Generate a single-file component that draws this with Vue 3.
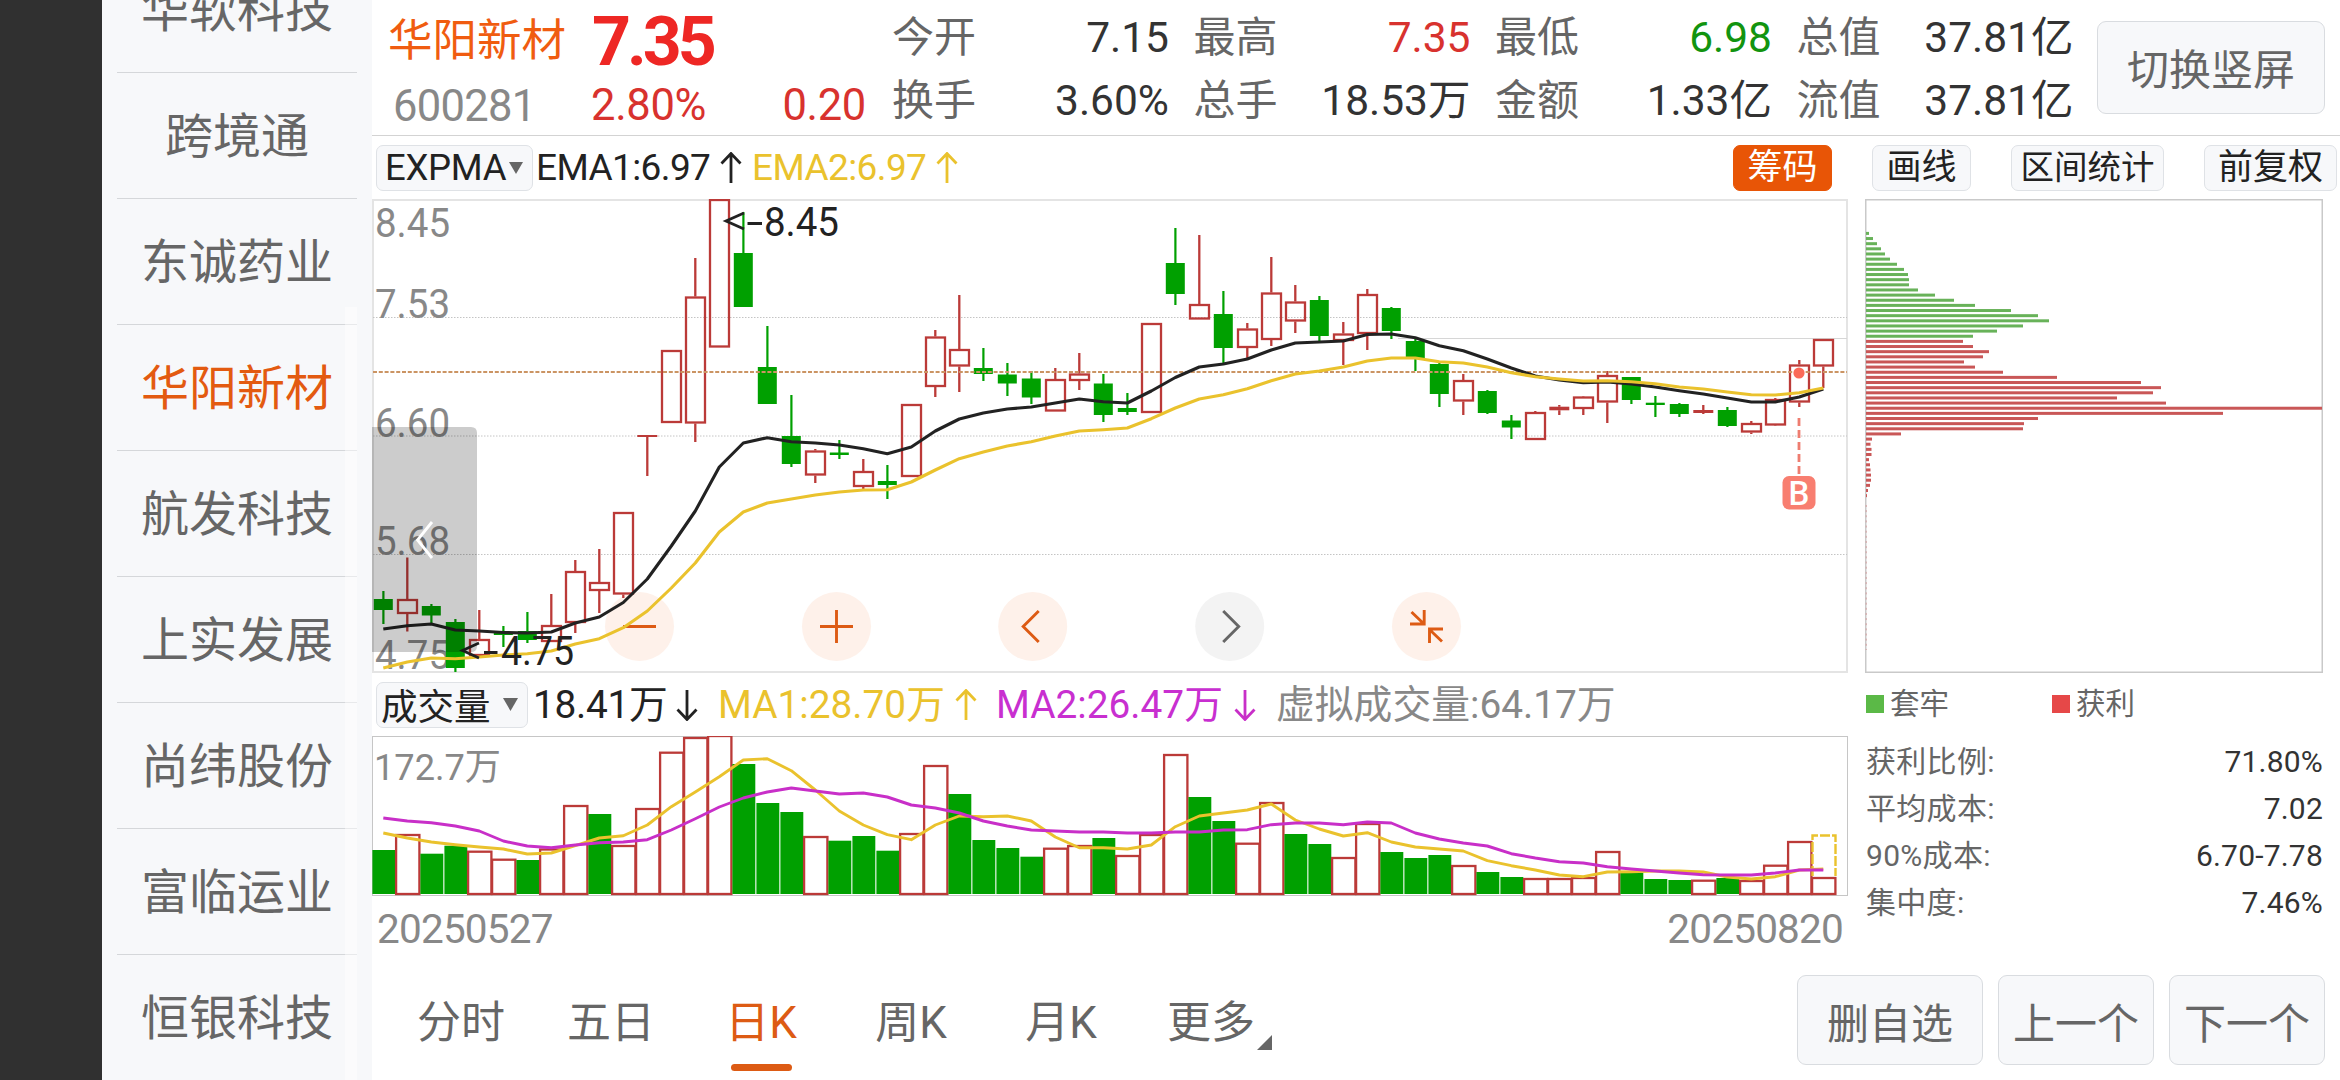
<template>
  <div class="app">
    <div class="edge"></div>

    <aside class="watchlist">
      <div
        v-for="name in stocks"
        :key="name"
        class="stock"
        :class="{ active: name === current }"
      >{{ name }}</div>
      <div class="scrollbar"></div>
    </aside>

    <main class="main">
      <header class="header">
        <div class="quote">
          <span class="q-name">{{ current }}</span>
          <span class="q-price">7.35</span>
          <span class="q-code">600281</span>
          <span class="q-change"><span>2.80%</span><span>0.20</span></span>
        </div>
        <div class="stats">
          <div v-for="s in stats" :key="s.label" class="stat">
            <span class="stat-label">{{ s.label }}</span>
            <span class="stat-value" :class="s.cls">{{ s.value }}</span>
          </div>
        </div>
        <button class="btn btn-switch">切换竖屏</button>
      </header>

      <div class="toolbar">
        <div class="picker picker-main">
          <span>EXPMA</span>
          <svg width="14" height="12" viewBox="0 0 14 12"><path d="M0 0H14L7 12Z" fill="#666" /></svg>
        </div>
        <span class="ind ema ema1">EMA1:6.97</span>
        <svg class="arrow c-black" viewBox="0 0 22 32"><path d="M11 31V2M1.5 11.5L11 1.5L20.5 11.5" /></svg>
        <span class="ind ema ema2">EMA2:6.97</span>
        <svg class="arrow c-yellow" viewBox="0 0 22 32"><path d="M11 31V2M1.5 11.5L11 1.5L20.5 11.5" /></svg>
        <div class="tools">
          <button class="tool primary">筹码</button>
          <button class="tool">画线</button>
          <button class="tool wide">区间统计</button>
          <button class="tool mid">前复权</button>
        </div>
      </div>

      <div class="body">
        <section class="charts">
          <!-- K线主图 -->
          <svg class="kline" viewBox="372 199 1477 474" width="1477" height="474">
            <rect x="373" y="200" width="1474" height="472" fill="none" stroke="#e4e4e4" stroke-width="2" />
            <line v-for="y in [317.5, 436, 554.5]" :key="y" x1="373" x2="1847" :y1="y" :y2="y" class="dotted" />
            <line x1="1398" x2="1847" y1="338.5" y2="338.5" stroke="#d6d6d6" />

            <text
              v-for="l in axis"
              :key="l.t"
              x="375"
              :y="l.y"
              class="axis"
              textLength="75"
              lengthAdjust="spacingAndGlyphs"
            >{{ l.t }}</text>

            <circle
              v-for="(c, i) in controls"
              :key="'c' + i"
              :cx="c.x"
              cy="626.5"
              r="34.5"
              :fill="c.gray ? '#f3f3f3' : '#fef1ea'"
            />
            <path
              v-for="(c, i) in controls"
              :key="'p' + i"
              :d="c.d"
              :transform="`translate(${c.x} 626.5)`"
              fill="none"
              :stroke="c.gray ? '#666' : '#dd5b14'"
              stroke-width="2.9"
            />

            <g v-for="(k, i) in candles" :key="'k' + i">
              <template v-if="k[0] === 'g'">
                <rect :x="cx(i) - 1" :y="k[1]" width="2.2" :height="k[4] - k[1]" fill="#00a000" />
                <rect :x="cx(i) - 9.5" :y="k[2]" width="19" :height="k[3] - k[2]" fill="#00a000" />
              </template>
              <template v-else>
                <path
                  :d="`M${cx(i)} ${k[1]}V${k[2]}M${cx(i)} ${k[3]}V${k[4]}`"
                  stroke="#bb3a38"
                  stroke-width="2.3"
                />
                <line
                  v-if="k[3] - k[2] < 4"
                  :x1="cx(i) - 10"
                  :x2="cx(i) + 10"
                  :y1="(k[2] + k[3]) / 2"
                  :y2="(k[2] + k[3]) / 2"
                  stroke="#bb3a38"
                  :stroke-width="Math.max(2, k[3] - k[2])"
                />
                <rect
                  v-else
                  :x="cx(i) - 9.3"
                  :y="k[2] + 1"
                  width="19"
                  :height="k[3] - k[2] - 2"
                  fill="none"
                  stroke="#bb3a38"
                  stroke-width="2.3"
                />
              </template>
            </g>

            <line x1="373" x2="1847" y1="372" y2="372" stroke="#cb9463" stroke-width="2" stroke-dasharray="4 1.8" />
            <polyline :points="toPoints(ema1)" fill="none" stroke="#222" stroke-width="3.1" stroke-linejoin="round" />
            <polyline :points="toPoints(ema2)" fill="none" stroke="#eac22d" stroke-width="3.1" stroke-linejoin="round" />

            <path d="M744 213L726 221L744 229M747.5 223.5H762" class="mark" />
            <text x="764" y="235.5" class="mark-text" textLength="75" lengthAdjust="spacingAndGlyphs">8.45</text>
            <path d="M479 643L462.5 650.5L479 658M484 652.5H497.5" class="mark" />
            <text x="501" y="664.5" class="mark-text" textLength="73" lengthAdjust="spacingAndGlyphs">4.75</text>

            <!-- 买点 -->
            <circle cx="1799" cy="373" r="5.6" fill="#fb6a58" />
            <line x1="1799" x2="1799" y1="418" y2="474" stroke="#ee7d70" stroke-width="2.8" stroke-dasharray="8 4" />
            <rect x="1782.5" y="476" width="33" height="33.5" rx="6.5" fill="#f87e70" />
            <text x="1799" y="504.5" class="buy">B</text>

            <path d="M372 427H471Q477 427 477 433V646Q477 652 471 652H372Z" fill="#000" fill-opacity=".2" />
            <path d="M432 522L417.5 540L432 558" fill="none" stroke="#fff" stroke-width="2.8" />
          </svg>

          <div class="toolbar vol-bar">
            <div class="picker picker-vol">
              <span>成交量</span>
              <svg width="15" height="13" viewBox="0 0 14 12"><path d="M0 0H14L7 12Z" fill="#666" /></svg>
            </div>
            <span class="ind vol">18.41万</span>
            <svg class="arrow c-black" viewBox="0 0 22 32"><path d="M11 1V30M1.5 20.5L11 30.5L20.5 20.5" /></svg>
            <span class="ind vol-ma1">MA1:28.70万</span>
            <svg class="arrow c-yellow" viewBox="0 0 22 32"><path d="M11 31V2M1.5 11.5L11 1.5L20.5 11.5" /></svg>
            <span class="ind vol-ma2">MA2:26.47万</span>
            <svg class="arrow c-purple" viewBox="0 0 22 32"><path d="M11 1V30M1.5 20.5L11 30.5L20.5 20.5" /></svg>
            <span class="ind vol-virtual">虚拟成交量:64.17万</span>
          </div>

          <!-- 成交量副图 -->
          <svg class="volume" viewBox="372 736 1477 160" width="1477" height="160">
            <rect x="372.5" y="736.5" width="1475" height="159" fill="none" stroke="#c6c6c6" />
            <text x="374" y="779.5" class="axis vol-axis" textLength="127" lengthAdjust="spacingAndGlyphs">172.7万</text>
            <g v-for="(top, i) in volumes" :key="'v' + i">
              <rect
                v-if="volDown.includes(i)"
                :x="cx(i) - 10.9"
                :y="top"
                width="22.9"
                :height="894 - top"
                fill="#00a000"
              />
              <rect
                v-else
                :x="cx(i) - 11.2"
                :y="top + 1"
                width="23.3"
                :height="893 - top"
                fill="#fff"
                stroke="#bb3a38"
                stroke-width="2.3"
              />
            </g>
            <path d="M1812.5 876V835.5H1835.5V876" fill="none" stroke="#eac22d" stroke-width="2.4" stroke-dasharray="10 2" />
            <polyline :points="toPoints(volMa1)" fill="none" stroke="#eac22d" stroke-width="2.9" stroke-linejoin="round" />
            <polyline :points="toPoints(volMa2)" fill="none" stroke="#c82fc8" stroke-width="2.9" stroke-linejoin="round" />
          </svg>

          <div class="dates"><span>20250527</span><span>20250820</span></div>
        </section>

        <section class="chips">
          <svg viewBox="1865 199 458 474" width="458" height="474">
            <rect x="1865.75" y="199.75" width="456.5" height="472.5" fill="none" stroke="#c9c9c9" stroke-width="1.5" />
            <rect
              v-for="(w, i) in chipBars"
              :key="i"
              x="1866"
              :y="231.9 + i * 5.142"
              :width="w"
              height="3"
              :fill="i < 21 ? '#68b259' : '#c95757'"
            />
            <line x1="1866.2" x2="1866.2" y1="505" y2="650" stroke="#d4a0a0" stroke-dasharray="2 3.14" />
          </svg>
          <div class="legend">
            <span><i class="green"></i>套牢</span>
            <span><i class="red"></i>获利</span>
          </div>
          <dl class="chip-info">
            <div v-for="r in chipInfo" :key="r[0]"><dt>{{ r[0] }}</dt><dd>{{ r[1] }}</dd></div>
          </dl>
        </section>
      </div>

      <footer class="footer">
        <nav class="tabs">
          <span v-for="t in tabs" :key="t" class="tab" :class="{ active: t === '日K' }">
            {{ t }}
            <svg v-if="t === '更多'" class="corner" viewBox="0 0 15 15"><path d="M15 0V15H0Z" fill="#666" /></svg>
          </span>
        </nav>
        <div class="actions">
          <button class="btn wide">删自选</button>
          <button class="btn">上一个</button>
          <button class="btn">下一个</button>
        </div>
      </footer>
    </main>
  </div>
</template>

<script setup>
const stocks = ['华软科技', '跨境通', '东诚药业', '华阳新材', '航发科技', '上实发展', '尚纬股份', '富临运业', '恒银科技']
const current = '华阳新材'
const tabs = ['分时', '五日', '日K', '周K', '月K', '更多']

const stats = [
  { label: '今开', value: '7.15' },
  { label: '最高', value: '7.35', cls: 'up' },
  { label: '最低', value: '6.98', cls: 'down' },
  { label: '总值', value: '37.81亿' },
  { label: '换手', value: '3.60%' },
  { label: '总手', value: '18.53万' },
  { label: '金额', value: '1.33亿' },
  { label: '流值', value: '37.81亿' },
]

const chipInfo = [
  ['获利比例:', '71.80%'],
  ['平均成本:', '7.02'],
  ['90%成本:', '6.70-7.78'],
  ['集中度:', '7.46%'],
]

const axis = [
  { t: '8.45', y: 237 },
  { t: '7.53', y: 318 },
  { t: '6.60', y: 436.5 },
  { t: '5.68', y: 555 },
  { t: '4.75', y: 669 },
]

const controls = [
  { x: 639.5, d: 'M-16.5 0H16.5' },
  { x: 836.5, d: 'M-16.5 0H16.5M0 -16.5V16.5' },
  { x: 1032.7, d: 'M6 -15.5L-9.5 0L6 15.5' },
  { x: 1229.7, d: 'M-6.5 -15.5L9 0L-6.5 15.5', gray: true },
  { x: 1426.5, d: 'M-15 -14.5L-3 -3M-2.3 -16.5V-2.5H-16.5M16.5 2.5H3V16.5M4 4L15.5 15' },
]

// [颜色, 最高, 实体上沿, 实体下沿, 最低]
const candles = [
  ['g', 591, 599, 610, 624], ['r', 557.5, 599, 614, 631.5], ['g', 604, 606, 615.5, 623], ['g', 619, 622, 668, 672],
  ['r', 610, 639, 656, 656], ['g', 626, 632, 635, 647], ['g', 612, 631, 640, 643], ['r', 594, 625, 642, 642],
  ['r', 560, 571, 623, 633], ['r', 549, 582, 591, 613], ['r', 512, 512, 594.5, 598], ['r', 435, 435, 437, 476],
  ['r', 350, 350, 423, 423], ['r', 258, 296.5, 423.5, 442], ['r', 199, 199, 347.5, 347.5], ['g', 212, 253, 307, 307],
  ['g', 326, 367, 404, 404], ['g', 395, 436, 464, 467], ['r', 449, 450.5, 475.5, 483], ['g', 440, 452.5, 455, 459],
  ['r', 459, 471, 487, 489], ['g', 465, 481, 485, 499], ['r', 404, 404, 477, 477], ['r', 330, 336.5, 387, 397],
  ['r', 295, 349, 366.5, 392], ['g', 348, 368, 374, 381], ['g', 363, 374.5, 383.5, 396], ['g', 371, 378.5, 397.5, 404],
  ['r', 368, 379, 411.5, 411.5], ['r', 353, 373.5, 381, 390], ['g', 374, 383.5, 415, 422], ['g', 393, 408, 412, 415],
  ['r', 323, 323, 413, 413], ['g', 228, 263, 294, 305], ['r', 235, 304, 319.5, 319.5], ['g', 291, 314, 348, 363],
  ['r', 323, 328.5, 348, 358], ['r', 257, 292.5, 340, 346], ['r', 285, 301.5, 321.5, 333], ['g', 296, 300, 336, 341],
  ['r', 322, 333.5, 341, 365], ['r', 289, 294, 334, 350], ['g', 307, 308, 331, 339], ['g', 339, 341, 359, 371],
  ['g', 362, 364, 394, 407], ['r', 374, 380, 401.5, 415], ['g', 390, 391, 413, 414], ['g', 415, 420.5, 427.5, 439],
  ['r', 411, 412, 440, 440], ['r', 405, 406.7, 410.3, 415], ['r', 396, 396.5, 409, 415], ['r', 371, 375, 402.5, 423],
  ['g', 377, 377, 400, 404], ['g', 396, 402.7, 405, 417], ['g', 403, 404, 414, 417], ['r', 405, 410, 413, 414],
  ['g', 407, 410, 426, 427], ['r', 421, 423, 432.5, 434], ['r', 398, 399, 425.5, 426], ['r', 360, 364.5, 402.5, 407],
  ['r', 339, 339, 366.5, 388],
]

const ema1 = [
  629, 625.7, 624, 630, 631, 632.5, 633, 632, 623, 617, 602.5, 579, 546, 511, 467, 443, 437.7, 441.7, 443, 445, 448.7,
  453.7, 447, 431, 419, 413, 409, 407, 403, 399, 401.7, 403, 391, 377.5, 367, 364, 359, 350, 343, 342, 341, 334.5, 334,
  337.7, 345.7, 350.7, 359, 368, 376, 380, 382.7, 382, 384, 387, 390.7, 394, 398, 402, 402, 397, 389,
]
const ema2 = [
  668, 662, 658, 658.7, 657, 655, 653.7, 651, 644, 638.7, 627.7, 611, 588, 563, 532, 512, 503, 499, 495, 492, 490,
  489.7, 482, 470, 458.7, 452, 446, 441.7, 436, 431, 429.7, 428, 418.7, 408, 399, 394.7, 388.7, 380.7, 374, 371, 367,
  361, 358, 358, 361.7, 363, 367, 372.7, 376.7, 379, 381, 380.7, 381.7, 383.7, 387, 389, 392, 394.7, 395, 392.7, 388,
]

const volumes = [
  850, 834, 853.7, 845.7, 850.7, 858.7, 860, 848.5, 805, 814, 845, 808, 751.7, 737, 735, 764, 803, 812, 836, 840.7,
  836, 850.7, 833, 765, 794, 840, 848, 856.7, 847.7, 845, 838, 855, 834, 754, 797, 821, 842.7, 802, 834, 844, 857, 823,
  852, 858, 855, 865, 872, 877, 878, 878, 877, 851, 872.7, 879, 880, 879.7, 878, 880, 864.7, 841, 877,
]
// 收盘低于前一日的柱子画成绿色
const volDown = [
  0, 2, 3, 6, 9, 15, 16, 17, 19, 20, 21, 24, 25, 26, 27, 30, 34, 35, 38, 39, 42, 43, 44, 46, 47, 52, 53, 54, 56,
]
const volMa1 = [
  833, 838, 842, 844.7, 847, 849, 854, 853, 845.7, 838, 835.7, 825, 806.7, 792, 776.7, 760, 758.7, 770.7, 790, 811,
  825, 834.7, 839.7, 825, 816, 816.7, 816, 821, 837, 847.7, 847.7, 849, 845, 826.7, 816, 813, 810, 804, 820, 829, 836,
  832.7, 842, 847, 849, 851, 860.7, 865.7, 870, 875, 876.7, 872, 871.7, 871, 871, 872, 877, 879, 876.7, 870, 869,
]
const volMa2 = [
  818, 821, 822.7, 826, 831, 841, 846, 847.7, 845, 842.7, 842, 839.7, 830, 818.7, 807, 798, 792, 788, 791, 794, 793,
  797, 805, 808, 813, 821, 826, 830, 831, 832, 832, 833, 833, 832, 832, 830, 829.7, 824.7, 823, 823, 824.7, 822, 823,
  833, 839, 843, 846, 853.7, 858, 861.7, 863, 866.7, 869, 871, 873, 874.7, 875, 875, 873, 870, 870,
]

// 筹码分布：前 21 条为套牢，其余为获利
const chipBars = [
  3, 7, 11, 15, 19, 24, 31, 38, 42, 43, 43, 52, 69, 88, 109, 145, 172, 183, 157, 131, 107,
  97, 107, 123, 117, 98, 109, 137, 191, 275, 295, 287, 251, 300, 456, 357, 172, 158, 157, 35,
  6, 4.5, 5.5, 5.5, 3, 4, 4.5, 5, 5, 4, 2, 1,
]

const cx = (i) => 383.3 + i * 24
const toPoints = (ys) => ys.map((y, i) => `${cx(i)},${y}`).join(' ')
</script>

<style>
body {
  background: #fff;
}
</style>

<style scoped>
.app {
  display: flex;
  width: 2340px;
  height: 1080px;
  overflow: hidden;
  background: #fff;
  font-family: Roboto, "Noto Sans CJK SC", sans-serif;
  color: #333;
}

button {
  font-family: inherit;
  padding: 0;
  margin: 0;
}

.edge {
  width: 102px;
  background: #303030;
  flex: none;
}

/* 自选列表 */
.watchlist {
  position: relative;
  flex: none;
  width: 240px;
  padding: 0 15px;
  background: #f7f8fa;
}

.stock {
  box-sizing: border-box;
  height: 126px;
  border-bottom: 1px solid #d5d7da;
  line-height: 128px;
  font-size: 48px;
  color: #666;
  text-align: center;
  white-space: nowrap;
}

.stock:first-child {
  margin-top: -53px;
}

.stock.active {
  color: #e35a10;
}

.scrollbar {
  position: absolute;
  right: 15px;
  top: 307px;
  bottom: 0;
  width: 12px;
  background: rgba(255, 255, 255, 0.45);
}

.main {
  flex: 1;
  min-width: 0;
  display: flex;
  flex-direction: column;
}

/* 行情头部 */
.header {
  box-sizing: border-box;
  height: 136px;
  flex: none;
  display: flex;
  border-bottom: 1px solid #d3d3d3;
}

.quote {
  width: 520px;
  box-sizing: border-box;
  display: grid;
  grid-template-columns: 201px 278px;
  grid-template-rows: 77px 59px;
  padding-left: 17px;
  align-items: center;
  white-space: nowrap;
}

.q-name {
  font-size: 44.5px;
  padding-bottom: 4px;
  margin-left: -1px;
  color: #f05c10;
}

.q-price {
  font-size: 68px;
  font-weight: 700;
  line-height: 72px;
  padding-top: 6px;
  letter-spacing: -4px;
  margin-left: 2px;
  color: #ee2724;
}

.q-code {
  font-size: 43.5px;
  letter-spacing: -0.7px;
  color: #888;
  padding-left: 4px;
}

.q-change {
  display: flex;
  justify-content: space-between;
  font-size: 43.5px;
  letter-spacing: -0.3px;
  color: #d8322e;
  padding: 0 2px 2px 1px;
}

.stats {
  width: 1180px;
  display: grid;
  grid-template-columns: repeat(4, 277px);
  grid-template-rows: 63px 63px;
  column-gap: 24.5px;
  padding-top: 6px;
}

.stat {
  display: flex;
  justify-content: space-between;
  align-items: center;
  font-size: 42px;
  line-height: 63px;
  white-space: nowrap;
}

.stat-label {
  color: #666;
}

.stat-value {
  font-size: 42.5px;
}

.up {
  color: #d8322e;
}

.down {
  color: #12940f;
}

.btn {
  box-sizing: border-box;
  width: 156px;
  height: 90px;
  border: 1px solid #d9dce0;
  border-radius: 9px;
  background: #f7f8fa;
  font-size: 42px;
  color: #666;
  white-space: nowrap;
}

.btn.wide {
  width: 186px;
}

.btn-switch {
  width: 228px;
  height: 93px;
  margin: 21px 0 0 25px;
  padding-bottom: 2px;
}

/* 指标栏 */
.toolbar {
  height: 63px;
  flex: none;
  display: flex;
  align-items: center;
  padding-left: 4px;
  white-space: nowrap;
}

.picker {
  box-sizing: border-box;
  height: 46px;
  display: flex;
  align-items: center;
  border: 1px solid #dfe2e6;
  border-radius: 7px;
  background: #f7f8fa;
  font-size: 36.5px;
  color: #222;
}

.picker-main {
  width: 157px;
  padding-left: 8px;
  gap: 3px;
  letter-spacing: -0.3px;
}

.picker-vol {
  width: 152px;
  padding-left: 4px;
  gap: 12px;
}

.ind {
  font-size: 38.8px;
  line-height: 46px;
}

.arrow {
  width: 22px;
  height: 32px;
  fill: none;
  stroke-width: 2.8;
  flex: none;
}

.c-black {
  stroke: #222;
}

.c-yellow {
  stroke: #eac22d;
}

.c-purple {
  stroke: #c82fc8;
}

.ema {
  width: 184px;
  font-size: 37px;
  letter-spacing: -0.6px;
}

.ema1 {
  margin-left: 3px;
  color: #222;
}

.ema2 {
  margin-left: 10px;
  color: #eac22d;
}

.vol {
  width: 143px;
  margin-left: 5px;
  letter-spacing: -0.3px;
  color: #222;
}

.vol-ma1 {
  width: 237px;
  margin-left: 20px;
  color: #eac22d;
}

.vol-ma2 {
  width: 238px;
  margin-left: 19px;
  color: #c82fd0;
}

.vol-virtual {
  margin-left: 20px;
  color: #888;
}

.tools {
  display: flex;
  margin-left: auto;
  padding-right: 3px;
  gap: 40px;
}

.tool {
  box-sizing: border-box;
  width: 99px;
  height: 46px;
  border: 1px solid #dfe2e6;
  border-radius: 7px;
  background: #f7f8fa;
  font-size: 35px;
  line-height: 42px;
  color: #222;
}

.tool.primary {
  border-color: #e85506;
  background: #e85506;
  color: #fff;
}

.tool.wide {
  width: 153px;
  font-size: 33.5px;
}

.tool.mid {
  width: 133px;
}

.body {
  display: flex;
  flex: none;
  height: 776px;
}

.charts {
  width: 1477px;
  flex: none;
}

.charts > svg,
.chips > svg {
  display: block;
}

.dotted {
  stroke: #c4c4c4;
  stroke-width: 1;
  stroke-dasharray: 1.5 1.5;
}

.axis {
  font-size: 40.5px;
  fill: #888;
}

.vol-axis {
  font-size: 37px;
}

.mark {
  fill: none;
  stroke: #222;
  stroke-width: 2.8;
}

.mark-text {
  font-size: 40px;
  fill: #222;
}

.buy {
  font-size: 33px;
  font-weight: 500;
  fill: #fff;
  text-anchor: middle;
}

.dates {
  display: flex;
  justify-content: space-between;
  padding: 8px 6px 0 5px;
  font-size: 40.5px;
  line-height: 50px;
  letter-spacing: -0.8px;
  color: #888;
}

/* 筹码分布 */
.chips {
  width: 458px;
  margin-left: 16px;
}

.legend {
  display: flex;
  height: 62px;
  font-size: 29.5px;
  line-height: 62px;
  color: #666;
}

.legend span {
  display: flex;
  align-items: center;
  width: 186px;
}

.legend i {
  width: 18px;
  height: 18px;
  margin-right: 6px;
  margin-left: 1px;
}

.green {
  background: #5bb947;
}

.red {
  background: #e64848;
}

.chip-info {
  margin: 3px 0 0;
  font-size: 30px;
  line-height: 47px;
}

.chip-info div {
  display: flex;
  justify-content: space-between;
}

.chip-info dt {
  margin-left: 1px;
  letter-spacing: 0.3px;
  color: #666;
}

.chip-info dd {
  margin: 0;
  letter-spacing: 0.2px;
}

/* 底部 */
.footer {
  flex: 1;
  display: flex;
  justify-content: space-between;
}

.tabs {
  display: flex;
  padding-left: 14px;
}

.tab {
  position: relative;
  width: 150px;
  height: 105px;
  line-height: 96px;
  font-size: 44px;
  color: #666;
  text-align: center;
}

.tab.active {
  color: #dd5b14;
}

.tab.active::after {
  content: "";
  position: absolute;
  left: 45px;
  top: 89px;
  width: 61px;
  height: 7px;
  border-radius: 4px;
  background: #dd5b14;
}

.corner {
  position: absolute;
  right: 14px;
  top: 60px;
  width: 15px;
  height: 15px;
}

.actions {
  display: flex;
  gap: 15px;
  padding-right: 15px;
}
</style>
